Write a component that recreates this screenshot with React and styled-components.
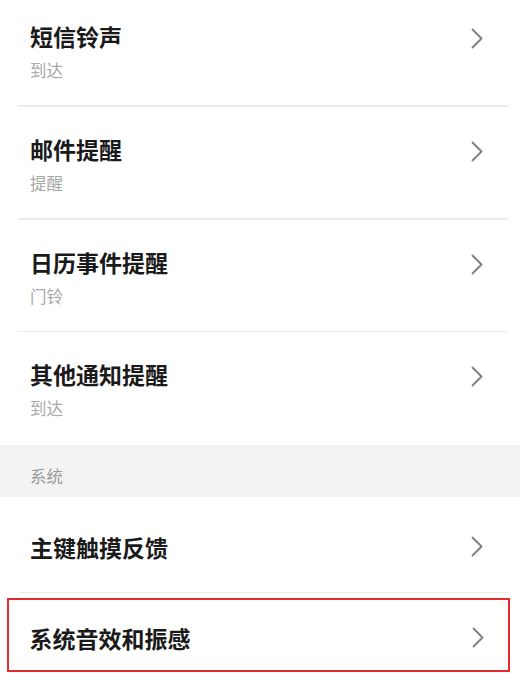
import React from 'react';
import styled, { createGlobalStyle } from 'styled-components';

const GlobalStyle = createGlobalStyle`
  html, body {
    margin: 0;
    padding: 0;
    background: #fff;
  }
  body {
    font-family: "Noto Sans CJK SC", "Noto Sans", sans-serif;
    overflow: hidden;
  }
`;

const Page = styled.div`
  width: 520px;
  height: 686px;
  overflow: hidden;
  background: #fff;
`;

const List = styled.div`
  display: flex;
  flex-direction: column;
  margin-top: ${(p) => (p.$offset ? p.$offset : 0)}px;
`;

const Row = styled.div`
  display: flex;
  align-items: ${(p) => (p.$sub ? 'flex-start' : 'center')};
  box-sizing: border-box;
  height: ${(p) => p.$h}px;
  padding: ${(p) => (p.$sub ? '27px 37px 0 30px' : `${p.$pt || 0}px ${p.$pr || 37}px 0 ${p.$pl || 30}px`)};
  position: relative;

  &::after {
    content: '';
    display: ${(p) => (p.$divider ? 'block' : 'none')};
    position: absolute;
    left: 18px;
    right: 12px;
    bottom: 0;
    height: 1.5px;
    background: #ececec;
  }
`;

const Texts = styled.div`
  flex: 1;
  display: flex;
  flex-direction: column;
`;

const Title = styled.div`
  font-size: 23px;
  line-height: 30px;
  font-weight: 700;
  color: #1a1a1a;
`;

const Sub = styled.div`
  margin-top: 9px;
  font-size: 16.5px;
  line-height: 20px;
  color: #a9a9a9;
`;

const Chevron = styled.svg`
  width: 12px;
  height: 21px;
  flex: none;
  align-self: ${(p) => (p.$sub ? 'flex-start' : 'center')};
  margin-top: ${(p) => (p.$sub ? '7px' : '0')};
`;

const SectionHeader = styled.div`
  box-sizing: border-box;
  height: 52px;
  padding: 21px 30px 0;
  background: #f3f3f3;
  font-size: 16.5px;
  line-height: 20px;
  color: #9a9a9a;
`;

const Highlight = styled.div`
  box-sizing: border-box;
  width: 503px;
  height: 74px;
  margin: 5px 0 0 7px;
  border: 2.5px solid #e42a30;
`;

const Arrow = ({ sub }) => (
  <Chevron $sub={sub} viewBox="0 0 12 21">
    <path d="M1.5 1.5 L10.5 10.5 L1.5 19.5" fill="none" stroke="#808080" strokeWidth="1.9" strokeLinecap="round" strokeLinejoin="round" />
  </Chevron>
);

const ringtones = [
  { title: '短信铃声', sub: '到达' },
  { title: '邮件提醒', sub: '提醒' },
  { title: '日历事件提醒', sub: '门铃' },
  { title: '其他通知提醒', sub: '到达' },
];

export default function App() {
  return (
    <Page>
      <GlobalStyle />
      <List $offset={-6}>
        {ringtones.map((item, i) => (
          <Row key={item.title} $sub $h={i === 1 || i === 3 ? 113 : 112.5} $divider={i < ringtones.length - 1}>
            <Texts>
              <Title>{item.title}</Title>
              <Sub>{item.sub}</Sub>
            </Texts>
            <Arrow sub />
          </Row>
        ))}
      </List>
      <SectionHeader>系统</SectionHeader>
      <List>
        <Row $h={96} $pt={3} $divider>
          <Texts>
            <Title>主键触摸反馈</Title>
          </Texts>
          <Arrow />
        </Row>
        <Highlight>
          <Row $h={69} $pt={6} $pl={20.5} $pr={24.5}>
            <Texts>
              <Title>系统音效和振感</Title>
            </Texts>
            <Arrow />
          </Row>
        </Highlight>
      </List>
    </Page>
  );
}
